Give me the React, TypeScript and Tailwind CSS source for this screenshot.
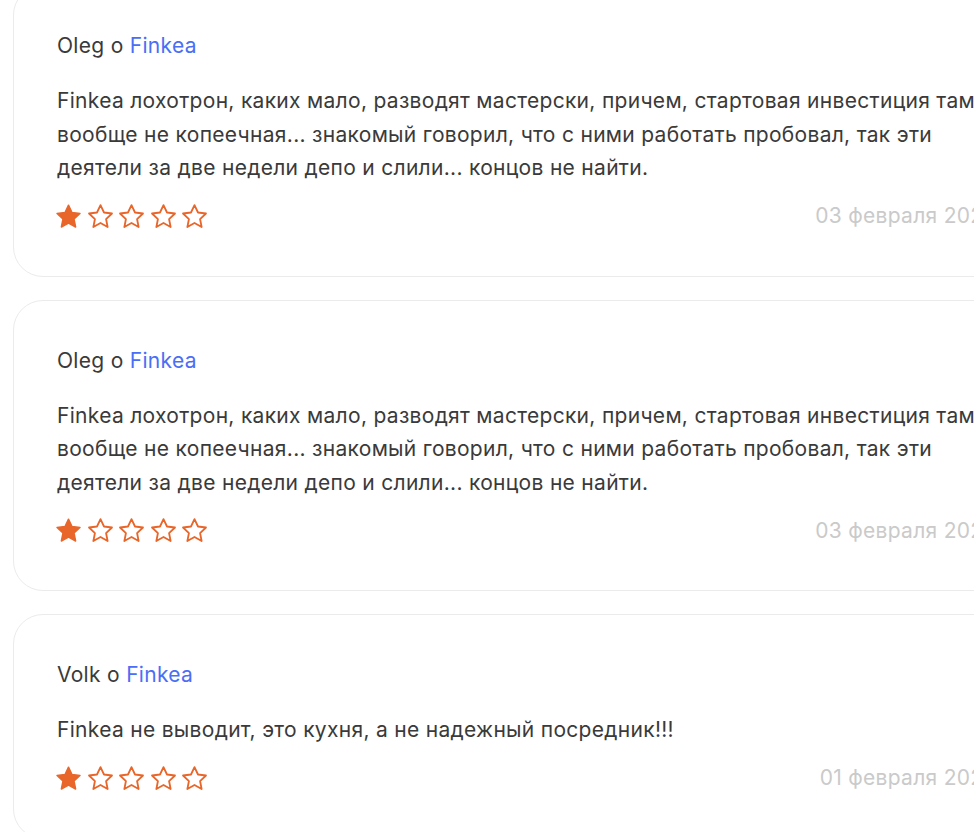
const reviews = [
  {
    author: "Oleg",
    company: "Finkea",
    text: "Finkea лохотрон, каких мало, разводят мастерски, причем, стартовая инвестиция там вообще не копеечная... знакомый говорил, что с ними работать пробовал, так эти деятели за две недели депо и слили... концов не найти.",
    rating: 1,
    date: "03 февраля 2024",
  },
  {
    author: "Oleg",
    company: "Finkea",
    text: "Finkea лохотрон, каких мало, разводят мастерски, причем, стартовая инвестиция там вообще не копеечная... знакомый говорил, что с ними работать пробовал, так эти деятели за две недели депо и слили... концов не найти.",
    rating: 1,
    date: "03 февраля 2024",
  },
  {
    author: "Volk",
    company: "Finkea",
    text: "Finkea не выводит, это кухня, а не надежный посредник!!!",
    rating: 1,
    date: "01 февраля 2024",
  },
];

function Star({ filled }: { filled: boolean }) {
  return (
    <svg viewBox="0 0 24 24" className="size-[29px]" aria-hidden>
      <path
        d="M12 2.6l2.9 6.1 6.6.8-4.9 4.6 1.3 6.6L12 17.4l-5.9 3.3 1.3-6.6-4.9-4.6 6.6-.8z"
        fill={filled ? "#e8662a" : "none"}
        stroke="#e8662a"
        strokeWidth={filled ? 1.2 : 1.5}
        strokeLinejoin="round"
      />
    </svg>
  );
}

export default function App() {
  return (
    <div className="min-h-[832px] overflow-hidden bg-white font-['Inter',sans-serif] text-[21px] tracking-[0.3px] text-[#3a3a3a]">
      <div className="ml-[13px] mt-[-15px] flex w-[1028px] flex-col gap-[23px]">
        {reviews.map((review, i) => (
          <article key={i} className="rounded-[30px] border border-[#ebebeb] bg-white px-[43px] pb-[43px] pt-[43px]">
            <p className="leading-[33px]">
              {review.author} о <a href="#" className="text-[#4a6ef5]">{review.company}</a>
            </p>
            <p className="mt-[22px] leading-[33.5px]">{review.text}</p>
            <div className="mt-[15px] flex h-[33px] items-center justify-between">
              <div className="-ml-[3px] flex items-center gap-[2.5px]">
                {[1, 2, 3, 4, 5].map((n) => (
                  <Star key={n} filled={n <= review.rating} />
                ))}
              </div>
              <span className="text-[#cacaca]">{review.date}</span>
            </div>
          </article>
        ))}
      </div>
    </div>
  );
}
